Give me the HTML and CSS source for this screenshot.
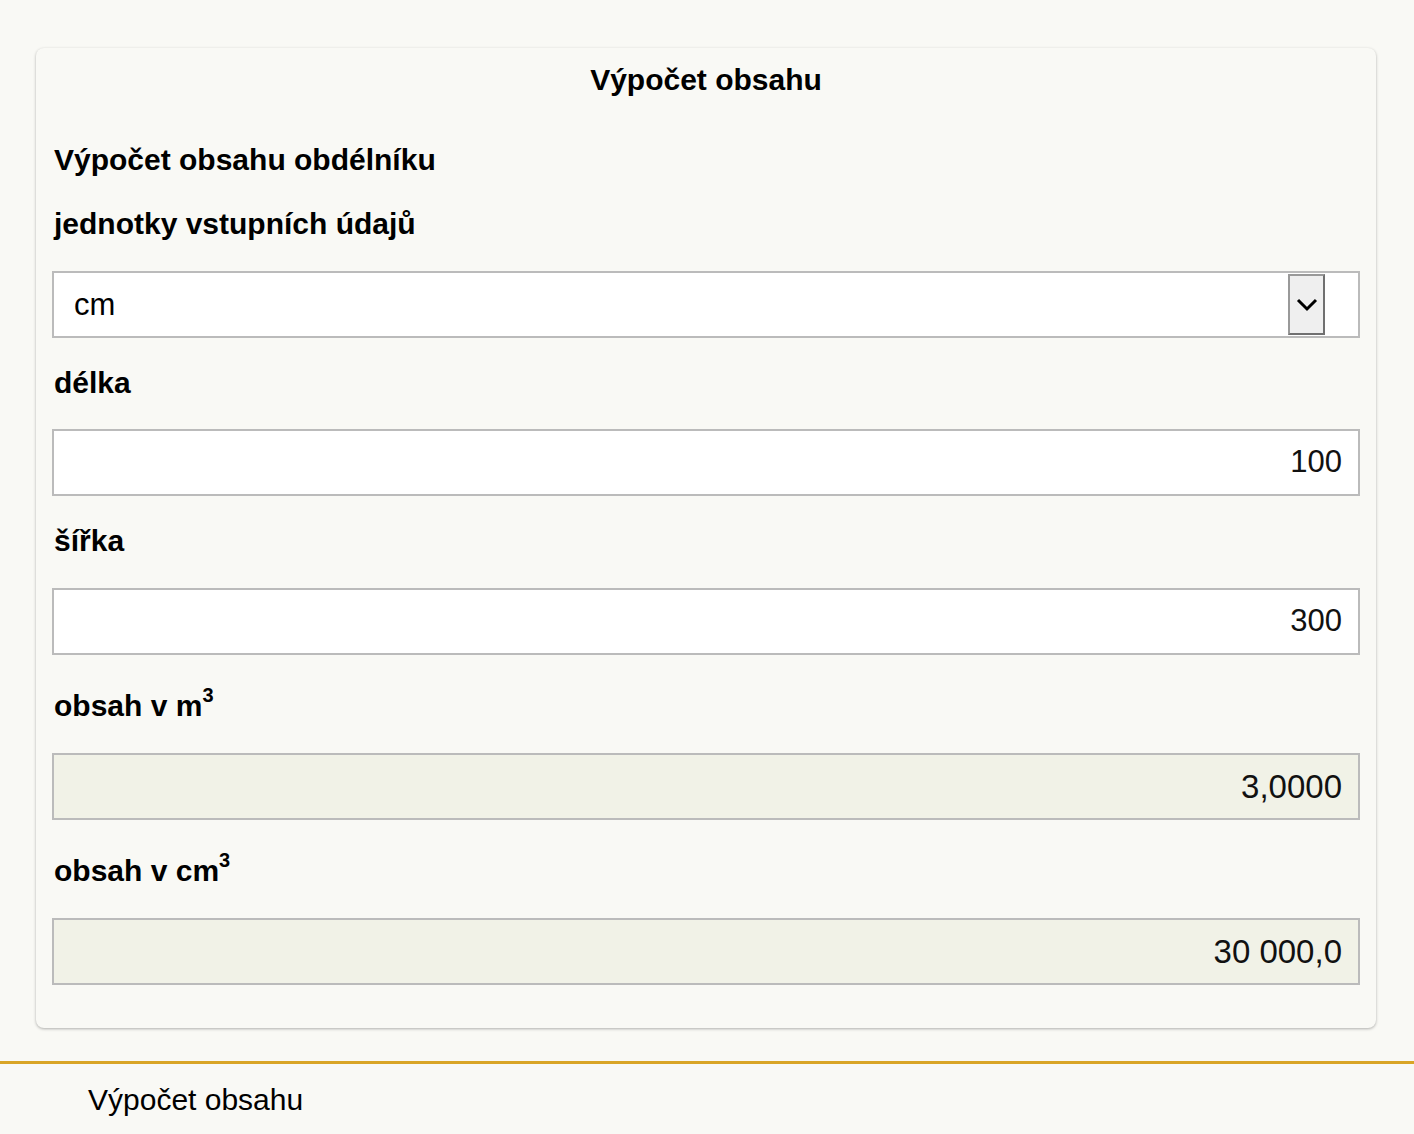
FILE: index.html
```
<!DOCTYPE html>
<html lang="cs">
<head>
  <meta charset="UTF-8">
  <title>Výpočet obsahu</title>
  <link rel="stylesheet" href="styles.css">
</head>
<body>
  <div class="calc">
    <h1 class="calc-title">Výpočet obsahu</h1>
    <h2 class="calc-sub">Výpočet obsahu obdélníku</h2>

    <label class="field-label units-label" for="units">jednotky vstupních údajů</label>
    <div class="select-box" id="units">
      <span class="select-value">cm</span>
      <span class="select-btn">
        <svg width="22" height="14" viewBox="0 0 22 14"><path d="M2 2 L11 11 L20 2" fill="none" stroke="#000" stroke-width="3"/></svg>
      </span>
    </div>

    <label class="field-label first-label" for="len">délka</label>
    <input class="field" id="len" type="text" value="100">

    <label class="field-label" for="wid">šířka</label>
    <input class="field" id="wid" type="text" value="300">

    <label class="field-label out-label">obsah v m<sup>3</sup></label>
    <div class="field result">3,0000</div>

    <label class="field-label out-label">obsah v cm<sup>3</sup></label>
    <div class="field result">30&nbsp;000,0</div>
  </div>

  <footer class="foot">
    <span>Výpočet obsahu</span>
  </footer>
</body>
</html>
```

FILE: styles.css
```
body {
  margin: 0;
  background: #f9f9f5;
  font-family: "Liberation Sans", Arial, sans-serif;
  color: #000;
}

.calc {
  display: flex;
  flex-direction: column;
  margin: 48px 38px 0 36px;
  padding: 0 16px 43px 16px;
  background: #f9f9f5;
  border-radius: 8px;
  box-shadow: 0 1px 3px rgba(0, 0, 0, 0.3);
}

.calc-title {
  margin: 0;
  height: 64px;
  line-height: 64px;
  text-align: center;
  font-size: 30px;
  font-weight: bold;
}

.calc-sub {
  margin: 16px 0 0;
  height: 64px;
  line-height: 64px;
  padding-left: 2px;
  font-size: 30px;
  font-weight: bold;
}

.field-label {
  display: block;
  height: 64px;
  line-height: 64px;
  margin: 13px 0 15px;
  padding-left: 2px;
  font-size: 30px;
  font-weight: bold;
}
.units-label {
  margin: 0 0 15px;
}
.first-label {
  margin-bottom: 14px;
}
.out-label {
  height: 70px;
  line-height: 70px;
  margin: 16px 0 12px;
}
.out-label sup {
  font-size: 20px;
  line-height: 0;
  vertical-align: 14px;
}

.select-box {
  display: flex;
  align-items: stretch;
  height: 67px;
  box-sizing: border-box;
  border: 2px solid #bbb;
  background: #fff;
  padding-right: 33px;
}
.select-value {
  flex: 1;
  display: flex;
  align-items: center;
  padding-left: 20px;
  font-size: 31px;
}
.select-btn {
  width: 33px;
  margin: 1px 0;
  display: flex;
  align-items: center;
  justify-content: center;
  background: #efefef;
  border: 2px solid #999;
  border-right-color: #707070;
  border-bottom-color: #707070;
}

.field {
  display: block;
  width: 100%;
  height: 67px;
  box-sizing: border-box;
  margin: 0;
  padding: 0 16px 2px;
  border: 2px solid #bbb;
  background: #fff;
  text-align: right;
  font-family: "Liberation Sans", Arial, sans-serif;
  font-size: 31px;
  color: #111;
  outline: none;
}
.result {
  background: #f1f2e7;
  line-height: 63px;
  padding: 0 16px;
  font-size: 33px;
}

.foot {
  margin-top: 33px;
  border-top: 3px solid #d9a526;
  padding: 19px 0 0 88px;
  height: 60px;
  line-height: 34px;
  font-size: 30px;
  color: #000;
}
```
